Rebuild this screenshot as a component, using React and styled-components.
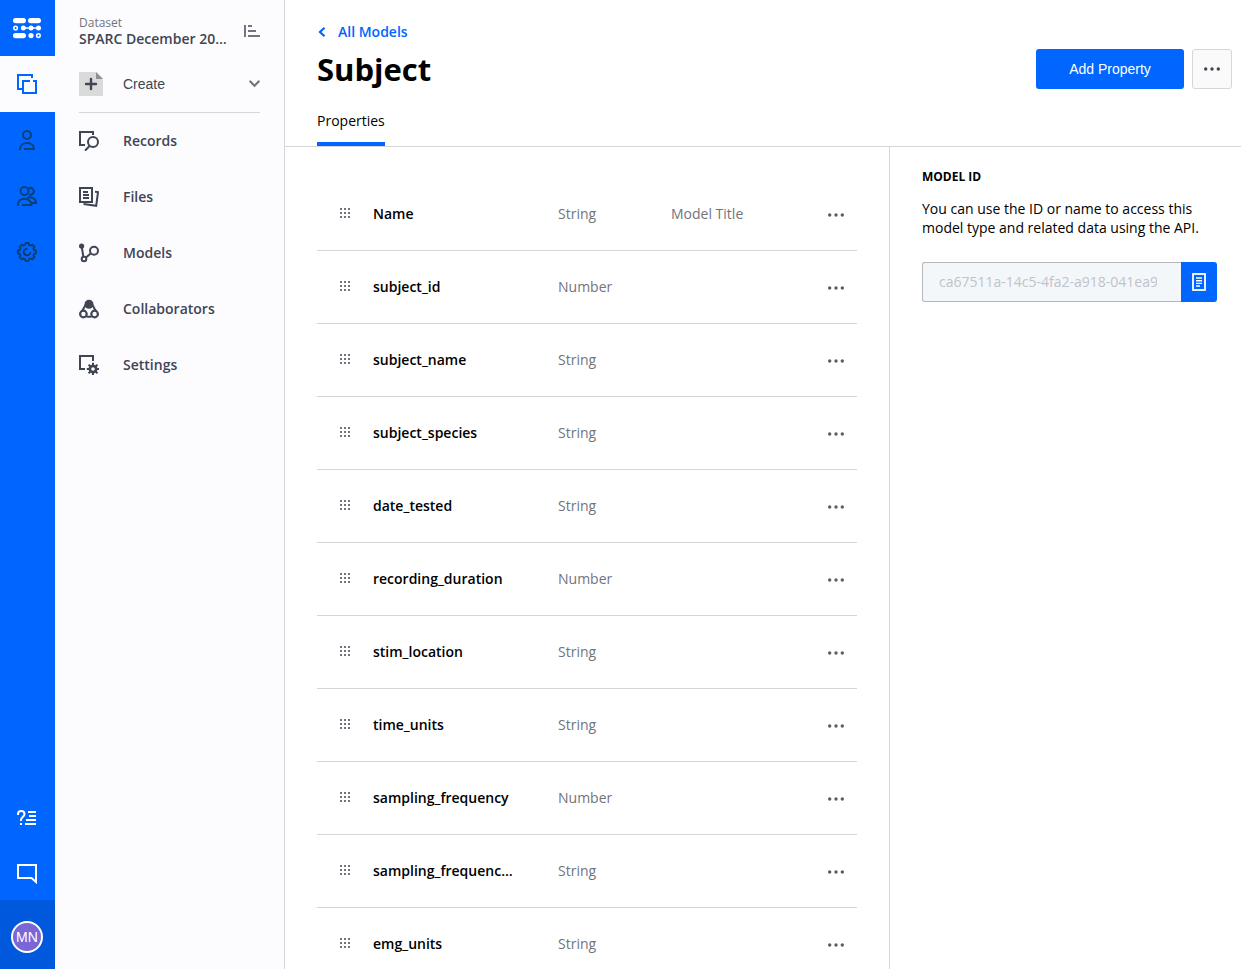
import React from 'react';
import styled, { createGlobalStyle, css } from 'styled-components';

const blue = '#0066ff';
const slate = '#404554';
const gray = '#71747c';
const line = '#d5d6da';
const medium = 580;
const sans = '"Open Sans", "Noto Sans", sans-serif';
const system = '"Liberation Sans", Arial, sans-serif';

const GlobalStyle = createGlobalStyle`
  *, *::before, *::after { box-sizing: border-box; }
  body { margin: 0; background: #fff; color: #000; font: 14px/20px ${sans}; }
  button, input { font: inherit; margin: 0; }
  button { cursor: pointer; }
  a { text-decoration: none; }
  svg { display: block; flex: none; }
`;

const Shell = styled.div`
  display: flex;
  height: 100vh;
  overflow: hidden;
`;

/* Primary rail */
const Rail = styled.nav`
  flex: none;
  display: flex;
  flex-direction: column;
  width: 55px;
  background: ${blue};
`;
const RailGroup = styled.div`
  display: flex;
  flex-direction: column;
  gap: 4px;
  margin-top: auto;
`;
const RailLink = styled.a`
  display: flex;
  align-items: center;
  justify-content: center;
  height: ${(p) => (p.$compact ? 52 : 56)}px;
  padding-right: 1px;
  color: ${(p) => p.$color || '#064079'};
  background: ${(p) => (p.$active ? '#fcfcff' : 'transparent')};
`;
const Account = styled.button`
  display: flex;
  align-items: center;
  justify-content: center;
  height: 69px;
  padding: 4px 1px 0 0;
  border: 0;
  background: #0059dd;
`;
const Avatar = styled.span`
  display: flex;
  align-items: center;
  justify-content: center;
  width: 32px;
  height: 32px;
  border: 2px solid #fff;
  border-radius: 50%;
  background: #7b66d6;
  color: #fff;
  font: 14px/20px ${system};
`;

/* Dataset navigation */
const Side = styled.aside`
  flex: none;
  width: 230px;
  padding: 14px 24px;
  background: #fcfcff;
  border-right: 1px solid ${line};
  color: ${slate};
`;
const DatasetHead = styled.div`
  display: flex;
  align-items: center;
  justify-content: space-between;
  height: 34px;
`;
const DatasetLabel = styled.div`
  font-size: 12px;
  line-height: 16px;
  color: ${gray};
`;
const DatasetName = styled.div`
  width: 148px;
  overflow: hidden;
  text-overflow: ellipsis;
  white-space: nowrap;
  font-weight: ${medium};
  line-height: 16px;
`;
const IconButton = styled.button`
  display: flex;
  align-items: center;
  justify-content: center;
  padding: 0;
  border: 0;
  background: none;
  color: ${gray};
`;
const CreateButton = styled.button`
  display: flex;
  align-items: center;
  gap: 20px;
  width: 100%;
  height: 65px;
  padding: 8px 0 1px;
  border: 0;
  border-bottom: 1px solid ${line};
  background: none;
  color: ${slate};
  font: 14px/20px ${system};
  svg:last-child { margin-left: auto; color: ${gray}; }
`;
const SideLink = styled.a`
  display: flex;
  align-items: center;
  gap: 24px;
  height: 56px;
  color: ${slate};
  font-weight: ${medium};
`;

/* Main area */
const Main = styled.main`
  flex: 1;
  min-width: 0;
  display: flex;
  flex-direction: column;
`;
const Header = styled.header`
  flex: none;
  padding: 22px 9px 0 32px;
  border-bottom: 1px solid ${line};
`;
const BackLink = styled.a`
  display: inline-flex;
  align-items: center;
  gap: 12px;
  height: 20px;
  color: ${blue};
  font-weight: ${medium};
`;
const TitleRow = styled.div`
  display: flex;
  align-items: center;
  height: 52px;
`;
const Title = styled.h1`
  margin: 0;
  font-size: 31px;
  line-height: 40px;
  font-weight: 700;
`;
const Actions = styled.div`
  display: flex;
  gap: 8px;
  margin-left: auto;
`;
const Button = styled.button`
  display: flex;
  align-items: center;
  justify-content: center;
  height: 40px;
  border-radius: 3px;
  font: 14px/20px ${system};
  ${(p) => p.$primary
    ? css`width: 148px; border: 0; background: ${blue}; color: #fff;`
    : css`width: 40px; padding: 0; border: 1px solid ${line}; background: #fafafa; color: ${slate};`}
`;
const Tabs = styled.div`
  display: flex;
`;
const Tab = styled.a`
  height: 51px;
  padding-top: 16px;
  border-bottom: 4px solid ${blue};
  color: #000;
`;
const Body = styled.div`
  flex: 1;
  min-height: 0;
  display: flex;
`;
const Listing = styled.section`
  flex: 1;
  min-width: 0;
  padding: 31px 32px;
  overflow-y: auto;
  scrollbar-width: none;
`;
const Table = styled.table`
  width: 100%;
  table-layout: fixed;
  border-collapse: separate;
  border-spacing: 0;
`;
const Row = styled.tr`
  height: 73px;
`;
const Cell = styled.td`
  padding: 0;
  border-bottom: 1px solid ${line};
  color: ${gray};
  vertical-align: middle;
`;
const NameCell = styled.th`
  padding: 0 44px 0 0;
  border-bottom: 1px solid ${line};
  overflow: hidden;
  text-overflow: ellipsis;
  white-space: nowrap;
  text-align: left;
  font-weight: ${medium};
`;
const Handle = styled(IconButton)`
  width: 56px;
  height: 24px;
  padding-bottom: 2px;
`;
const RowMenu = styled(IconButton)`
  width: 42px;
  height: 24px;
  padding-top: 2px;
  margin-left: auto;
  color: #5c5d61;
`;
const Details = styled.aside`
  flex: none;
  width: 352px;
  padding: 20px 24px 20px 32px;
  border-left: 1px solid ${line};
`;
const DetailsTitle = styled.h2`
  margin: 0 0 12px;
  font-size: 12px;
  line-height: 20px;
  font-weight: 700;
`;
const DetailsText = styled.p`
  margin: 0 0 25px;
  line-height: 19px;
`;
const CopyField = styled.div`
  display: flex;
  height: 40px;
`;
const IdInput = styled.input`
  flex: 1;
  min-width: 0;
  padding: 0 24px 0 16px;
  border: 1px solid #b5b7bb;
  border-right: 0;
  border-radius: 3px 0 0 3px;
  background: #f3f7fa;
  color: #bfc3ca;
`;
const CopyButton = styled(IconButton)`
  width: 36px;
  border-radius: 0 3px 3px 0;
  background: ${blue};
  color: #fff;
`;

/* Icons */
const Icon = ({ w = 20, h = 20, sw = 2, children }) => (
  <svg width={w} height={h} viewBox={`0 0 ${w} ${h}`} fill="none" stroke="currentColor" strokeWidth={sw} aria-hidden="true">
    {children}
  </svg>
);

// Closed cog outline: each tooth is a flat top joined to the root circle.
function cog(cx, cy, teeth, outer, root) {
  const step = (Math.PI * 2) / teeth;
  const pts = [];
  for (let i = 0; i < teeth; i += 1) {
    const a = i * step - Math.PI / 2;
    [[-0.31, root], [-0.2, outer], [0.2, outer], [0.31, root]].forEach(([t, r]) => {
      pts.push(`${(cx + r * Math.cos(a + t * step)).toFixed(2)} ${(cy + r * Math.sin(a + t * step)).toFixed(2)}`);
    });
  }
  return `M${pts.join('L')}Z`;
}

const Logo = () => (
  <Icon w={28} h={22} sw={1.5}>
    <g fill="currentColor" stroke="none">
      <rect y="1" width="13" height="5.2" rx="2.6" />
      <rect x="15" y="1" width="13" height="5.2" rx="2.6" />
      <rect y="16" width="13" height="5.2" rx="2.6" />
      <circle cx="10.3" cy="11" r="2.5" />
      <circle cx="18" cy="11" r="2.5" />
      <circle cx="25.5" cy="11" r="2.5" />
      <circle cx="18" cy="18.6" r="2.6" />
    </g>
    <path d="M10 11h15" />
    <circle cx="2.6" cy="11" r="1.8" />
    <circle cx="25.4" cy="18.6" r="1.8" />
  </Icon>
);
const DatasetsIcon = () => (
  <Icon><path d="M5 15H1V1h14v3M13 7H6v12h13V7h-3" /></Icon>
);
const PersonIcon = () => (
  <Icon w={16}><circle cx="8" cy="5" r="4" /><path d="M1 20v-1c0-3.600 3-6 7-6s7 2.400 7 6H5" /></Icon>
);
const PeopleIcon = () => (
  <Icon>
    <circle cx="7.500" cy="5" r="4" />
    <path d="M11.500 2.700a3.300 3.300 0 1 1 .6 5.600M1 20v-1.500C1 15 3.700 12.800 7.500 12.800s7 2.700 7 6.200H5M10 11.700c4.500-1.400 9 .8 9 5.300h-5" />
  </Icon>
);
const CogIcon = () => (
  <Icon w={22} h={22}>
    <path d={cog(11, 11, 8, 9.1, 7.5)} strokeLinejoin="round" />
    <path d="M11.500 7.800a3.300 3.300 0 1 0 2.800 3.200" />
  </Icon>
);
const HelpIcon = () => (
  <Icon w={20} h={16}>
    <path d="M1 5V4c0-2 1.300-3 3.200-3s3.300 1 3.300 3c0 3-3.500 3-3.500 6v1M4 13v2M11 2h8M12 6h7M9 10h10M8 14h11" />
  </Icon>
);
const ChatIcon = () => (
  <Icon><path d="M1 1h18v17l-4.500-4H1z" /></Icon>
);
const CollapseIcon = () => (
  <Icon w={16} h={12}><path d="M1 0v12M4 1h4M4 6h8M4 11h12" /></Icon>
);
const CreateIcon = () => (
  <Icon w={24} h={24}>
    <path d="M0 0h17l7 7v17H0z" fill="#dadada" stroke="none" />
    <path d="M17 0l7 7h-7z" fill="#8e9096" stroke="none" />
    <path d="M12 7v10M7 12h10" strokeWidth="2.400" strokeLinecap="round" />
  </Icon>
);
const ChevronDown = () => (
  <Icon w={11} h={8} sw={2.2}><path d="M1.300 1.500l4.200 4.200 4.200-4.200" strokeLinecap="round" /></Icon>
);
const ChevronLeft = () => (
  <Icon w={9} h={12} sw={2.2}><path d="M7.500 1.800L3 6l4.500 4.200" /></Icon>
);
const RecordsIcon = () => (
  <Icon><path d="M6 14H1V1h13v3M10.500 15L6 19.700" /><circle cx="14" cy="11" r="5" /></Icon>
);
const FilesIcon = () => (
  <Icon>
    <rect x="1" y="1" width="12" height="14" />
    <path d="M4 5h5M4 8h6M4 11h6" strokeWidth="1.800" />
    <path d="M16 4.800l3 .3-1.800 13.700L4.500 17" />
  </Icon>
);
const ModelsIcon = () => (
  <Icon>
    <circle cx="2.600" cy="3" r="2.600" fill="currentColor" stroke="none" />
    <circle cx="15" cy="7.800" r="4" />
    <circle cx="5" cy="16" r="2.300" />
    <path d="M2.800 4l1.500 9.500M7 14.400l5-4.200" />
  </Icon>
);
const CollaboratorsIcon = () => (
  <Icon sw={2.2}>
    <circle cx="10" cy="5.200" r="4.500" fill="currentColor" stroke="none" />
    <circle cx="4.400" cy="15" r="3.300" />
    <circle cx="15.600" cy="15" r="3.300" />
    <path d="M6.500 6L3.200 12M13.500 6l3.300 6M7.500 17.800h5" strokeWidth="2" />
  </Icon>
);
const SettingsIcon = () => (
  <Icon>
    <path d="M6 14H1V1h13v5" />
    <path d={cog(14, 14, 8, 6.3, 4.5)} fill="currentColor" stroke="none" />
    <circle cx="14" cy="14" r="1.800" fill="#fcfcff" stroke="none" />
  </Icon>
);
const Dots = () => (
  <Icon w={18} h={4}>
    <g fill="currentColor" stroke="none">
      <circle cx="2.700" cy="2" r="1.700" /><circle cx="9" cy="2" r="1.700" /><circle cx="15.300" cy="2" r="1.700" />
    </g>
  </Icon>
);
const GripIcon = () => (
  <Icon w={10} h={10}>
    <path d="M0 1h2M4 1h2M8 1h2M0 5h2M4 5h2M8 5h2M0 9h2M4 9h2M8 9h2" />
  </Icon>
);
const DocumentIcon = () => (
  <Icon w={14} h={18} sw={1.8}>
    <rect x="1" y="1" width="12" height="16" />
    <path d="M4 5h6M4 7.700h6M4 10.400h6M4 13h4" strokeWidth="1.400" />
  </Icon>
);

const sideLinks = [
  ['Records', RecordsIcon],
  ['Files', FilesIcon],
  ['Models', ModelsIcon],
  ['Collaborators', CollaboratorsIcon],
  ['Settings', SettingsIcon],
];

const properties = [
  ['Name', 'String', 'Model Title'],
  ['subject_id', 'Number'],
  ['subject_name', 'String'],
  ['subject_species', 'String'],
  ['date_tested', 'String'],
  ['recording_duration', 'Number'],
  ['stim_location', 'String'],
  ['time_units', 'String'],
  ['sampling_frequency', 'Number'],
  ['sampling_frequency_units', 'String'],
  ['emg_units', 'String'],
];

export default function App() {
  return (
    <Shell>
      <GlobalStyle />
      <Rail aria-label="Organization">
        <RailLink href="#home" $color="#fff" aria-label="Home"><Logo /></RailLink>
        <RailLink href="#datasets" $active $color={blue} aria-label="Datasets"><DatasetsIcon /></RailLink>
        <RailLink href="#people" aria-label="People"><PersonIcon /></RailLink>
        <RailLink href="#teams" aria-label="Teams"><PeopleIcon /></RailLink>
        <RailLink href="#settings" aria-label="Organization settings"><CogIcon /></RailLink>
        <RailGroup>
          <RailLink href="#help" $compact $color="#fff" aria-label="Help"><HelpIcon /></RailLink>
          <RailLink href="#chat" $compact $color="#fff" aria-label="Chat"><ChatIcon /></RailLink>
        </RailGroup>
        <Account type="button" aria-label="Account"><Avatar>MN</Avatar></Account>
      </Rail>

      <Side>
        <DatasetHead>
          <div>
            <DatasetLabel>Dataset</DatasetLabel>
            <DatasetName>SPARC December 2018 Demo</DatasetName>
          </div>
          <IconButton type="button" aria-label="Collapse menu"><CollapseIcon /></IconButton>
        </DatasetHead>
        <CreateButton type="button"><CreateIcon />Create<ChevronDown /></CreateButton>
        <nav aria-label="Dataset">
          {sideLinks.map(([label, Glyph]) => (
            <SideLink key={label} href={`#${label.toLowerCase()}`}><Glyph />{label}</SideLink>
          ))}
        </nav>
      </Side>

      <Main>
        <Header>
          <BackLink href="#models"><ChevronLeft />All Models</BackLink>
          <TitleRow>
            <Title>Subject</Title>
            <Actions>
              <Button type="button" $primary>Add Property</Button>
              <Button type="button" aria-label="More actions"><Dots /></Button>
            </Actions>
          </TitleRow>
          <Tabs><Tab href="#properties" aria-current="page">Properties</Tab></Tabs>
        </Header>
        <Body>
          <Listing>
            <Table aria-label="Properties">
              <colgroup>
                <col width="56" />
                <col width="185" />
                <col width="113" />
                <col />
                <col width="42" />
              </colgroup>
              <tbody>
                {properties.map(([name, type, note]) => (
                  <Row key={name}>
                    <Cell><Handle type="button" aria-label={`Reorder ${name}`}><GripIcon /></Handle></Cell>
                    <NameCell scope="row">{name}</NameCell>
                    <Cell>{type}</Cell>
                    <Cell>{note}</Cell>
                    <Cell><RowMenu type="button" aria-label={`Options for ${name}`}><Dots /></RowMenu></Cell>
                  </Row>
                ))}
              </tbody>
            </Table>
          </Listing>
          <Details>
            <DetailsTitle><label htmlFor="model-id">MODEL ID</label></DetailsTitle>
            <DetailsText>You can use the ID or name to access this model type and related data using the API.</DetailsText>
            <CopyField>
              <IdInput id="model-id" readOnly value="ca67511a-14c5-4fa2-a918-041ea97d5c20" />
              <CopyButton type="button" aria-label="Copy model ID"><DocumentIcon /></CopyButton>
            </CopyField>
          </Details>
        </Body>
      </Main>
    </Shell>
  );
}
